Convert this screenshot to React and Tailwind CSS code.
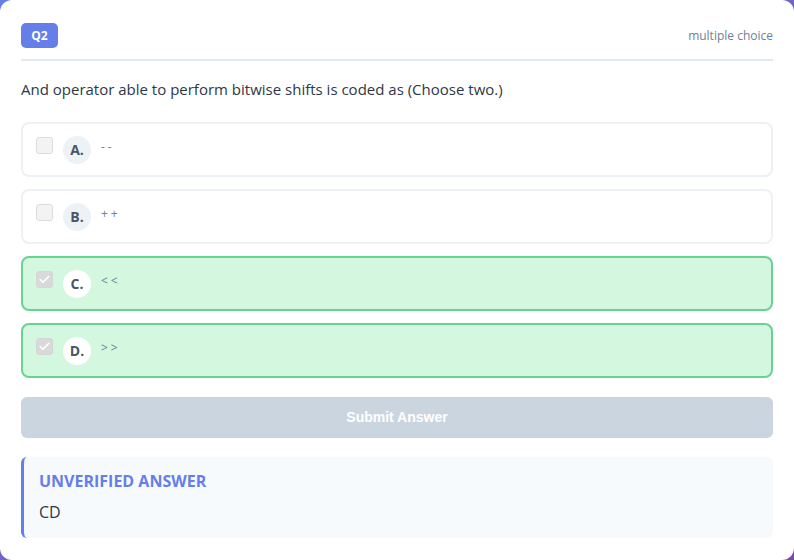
import { Check } from 'lucide-react'

const options = [
  { key: 'A', text: '--', selected: false },
  { key: 'B', text: '++', selected: false },
  { key: 'C', text: '<<', selected: true },
  { key: 'D', text: '>>', selected: true },
]

export default function App() {
  return (
    <div className="min-h-[560px] bg-gradient-to-br from-[#667eea] to-[#764ba2]" style={{ fontFamily: '"Open Sans", "Noto Sans", sans-serif' }}>
      <div className="h-[560px] bg-white rounded-xl px-[21px] pt-[23px]">
        <div className="flex items-center justify-between pb-[11px] border-b-2 border-[#e2e8f0]">
          <span className="h-[25px] w-[37px] flex items-center justify-center rounded-[5px] bg-[#667eea] text-white text-[12px] font-bold">Q2</span>
          <span className="text-[12px] text-[#718096]">multiple choice</span>
        </div>

        <p className="mt-[16px] text-[15px] text-[#2d3748] leading-[24px]">
          And operator able to perform bitwise shifts is coded as (Choose two.)
        </p>

        <div className="mt-[21px] flex flex-col gap-[12px]">
          {options.map(o => (
            <div
              key={o.key}
              className={
                o.selected
                  ? 'h-[55px] rounded-lg border-2 border-[#68d391] bg-[#d4f7df] flex items-center pl-[13px]'
                  : 'h-[55px] rounded-lg border-2 border-[#edf0f4] bg-white flex items-center pl-[13px]'
              }
            >
              <span
                className={
                  o.selected
                    ? 'w-[17px] h-[17px] rounded-[3px] border border-[#d6d6d6] bg-[#d9d9d9] flex items-center justify-center -mt-[8px]'
                    : 'w-[17px] h-[17px] rounded-[3px] border border-[#dcdcdc] bg-[#f3f3f3] flex items-center justify-center -mt-[8px]'
                }
              >
                {o.selected && <Check size={13} strokeWidth={3} className="text-white" />}
              </span>
              <span
                className={
                  o.selected
                    ? 'ml-[10px] w-[28px] h-[28px] rounded-full bg-white flex items-center justify-center text-[14px] font-bold text-[#4a5568]'
                    : 'ml-[10px] w-[28px] h-[28px] rounded-full bg-[#edf2f7] flex items-center justify-center text-[14px] font-bold text-[#4a5568]'
                }
              >
                {o.key}.
              </span>
              <span className="ml-[10px] -mt-[6px] text-[12px] text-[#718096] tracking-[3px]">{o.text}</span>
            </div>
          ))}
        </div>

        <button
          className="mt-[19px] w-full h-[41px] rounded-md bg-[#cbd5e0] text-white text-[14px] font-bold"
          style={{ fontFamily: '"Liberation Sans", Arial, sans-serif' }}
        >
          Submit Answer
        </button>

        <div className="mt-[19px] h-[81px] rounded-md bg-[#f7fafc] border-l-[3px] border-[#667eea] pl-[15px] pt-[12px]">
          <div className="text-[16px] font-bold text-[#667eea] leading-[24px]">UNVERIFIED ANSWER</div>
          <div className="mt-[7px] text-[16px] text-[#2d3748] leading-[24px]">CD</div>
        </div>
      </div>
    </div>
  )
}
